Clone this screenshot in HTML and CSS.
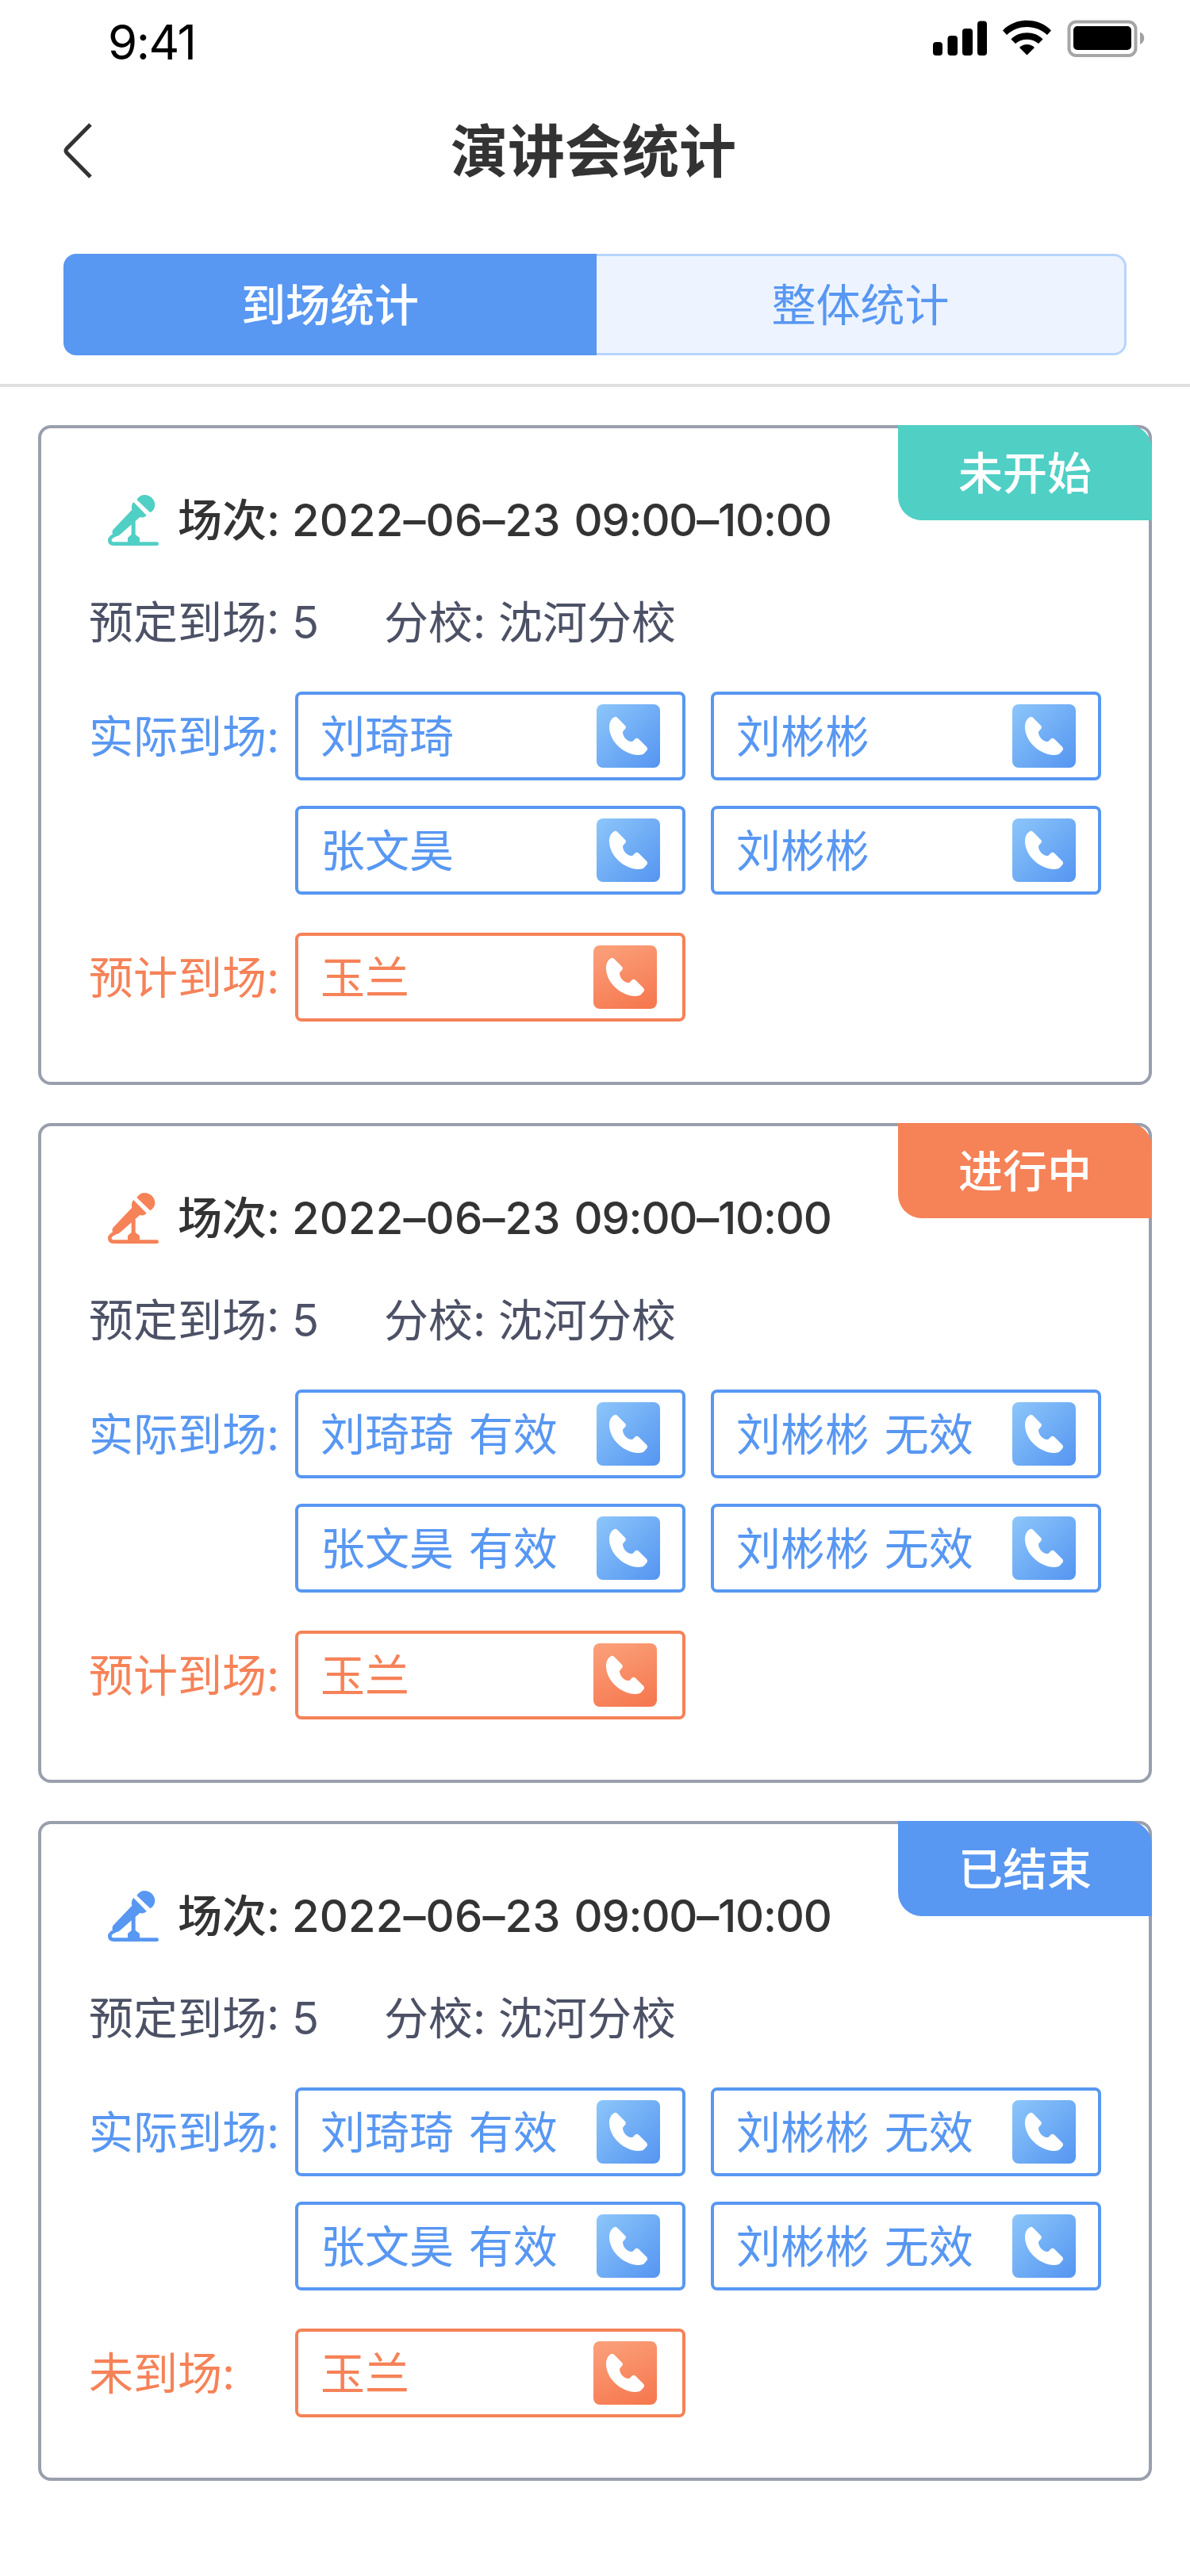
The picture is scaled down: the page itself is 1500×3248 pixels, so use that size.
FILE: index.html
```html
<!DOCTYPE html>
<html lang="zh-CN">
<head>
  <meta charset="UTF-8">
  <meta name="viewport" content="width=device-width, initial-scale=1.0">
  <title>演讲会统计</title>
  <link rel="stylesheet" href="styles.css">
</head>
<body>

  <!-- Shared icons -->
  <svg class="sprite" width="0" height="0">
    <defs>
      <linearGradient id="blueFill" x1="0" y1="0" x2="1" y2="1">
        <stop offset="0" stop-color="#8dc6fa"/>
        <stop offset="1" stop-color="#5495f1"/>
      </linearGradient>
      <linearGradient id="orangeFill" x1="0.3" y1="0" x2="0.7" y2="1">
        <stop offset="0" stop-color="#fa9e78"/>
        <stop offset="1" stop-color="#f67950"/>
      </linearGradient>
    </defs>
    <symbol id="phone" viewBox="0 0 240 240">
      <path fill="#fff" d="M66 49Q72 45 78 50L109 82Q113 87 109 92L101 101Q99 103 99 107C101 125 115 139 132 141Q136 142 138 139L147 130Q153 126 159 131L190 162Q194 168 191 173L180 186C173 192 160 193 148 191C95 184 48 135 48 86C48 68 55 56 66 49Z"/>
    </symbol>
    <symbol id="phone-blue" viewBox="0 0 240 240">
      <rect width="240" height="240" rx="24" fill="url(#blueFill)"/>
      <use href="#phone" width="240" height="240"/>
    </symbol>
    <symbol id="phone-orange" viewBox="0 0 240 240">
      <rect width="240" height="240" rx="24" fill="url(#orangeFill)"/>
      <use href="#phone" width="240" height="240"/>
    </symbol>
    <symbol id="mic" viewBox="0 0 192 192">
      <path fill="currentColor" d="M109 18C118 5 128 0 138 0C160 0 178 18 178 38C178 48 172 60 160 67Z"/>
      <path fill="currentColor" d="M97 27L146 77C140 84 130 87 121 84L46 150C42 154 38 156 34 156L17 148C16 140 17 134 20 131L91 56C88 45 90 35 97 27Z"/>
      <path fill="currentColor" d="M89 100H104V150L120 162V180H75V162L89 150Z"/>
      <path fill="none" stroke="currentColor" stroke-width="14" stroke-linecap="round" d="M28 151C12 158 7 164 7 171Q7 185 22 185H185"/>
    </symbol>
  </svg>

  <div class="status-bar">
    <span class="time">9:41</span>
    <svg class="status-icons" width="270" height="50" viewBox="0 0 270 50">
      <rect x="0" y="31" width="12" height="17" rx="4"/>
      <rect x="18.5" y="23" width="12.5" height="25" rx="4"/>
      <rect x="37" y="14" width="13" height="34" rx="4"/>
      <rect x="56" y="4.500" width="12" height="43.500" rx="4"/>
      <path d="M88 16.500C103 -0.500 134 -0.500 149 16.500L144 22C130 8.500 107 8.500 93 22Z"/>
      <path d="M98.500 27.500C108 16.500 129 16.500 138.500 27.500L133 33C125 26 112 26 104 33Z"/>
      <path d="M109 38C114 32.500 123 32.500 128 38L118.500 47.500Z"/>
      <rect x="171.500" y="5.500" width="84" height="42.500" rx="9" fill="none" stroke="#a6a6a6" stroke-width="4"/>
      <rect x="177" y="11" width="73" height="30" rx="5"/>
      <path fill="#a0a0a0" d="M261 18.500C268 21 268 31 261 34Z"/>
    </svg>
  </div>

  <header class="nav">
    <svg class="back" width="40" height="72" viewBox="0 0 40 72">
      <path d="M34 3L4 33.500Q2 36 4 38.500L34 69" fill="none" stroke="#333" stroke-width="5"/>
    </svg>
    <h1>演讲会统计</h1>
  </header>

  <div class="tabs">
    <div class="tab active">到场统计</div>
    <div class="tab">整体统计</div>
  </div>

  <main class="list">

    <section class="card teal">
      <div class="badge">未开始</div>
      <div class="session">
        <svg class="mic"><use href="#mic"/></svg>
        <span>场次: <span class="day">2022–06–23</span> <span class="hours">09:00–10:00</span></span>
      </div>
      <div class="info"><span class="count">预定到场: 5</span><span>分校: 沈河分校</span></div>
      <div class="group">
        <div class="label">实际到场:</div>
        <div class="people">
          <div class="person">刘琦琦<svg class="phone"><use href="#phone-blue"/></svg></div>
          <div class="person">刘彬彬<svg class="phone"><use href="#phone-blue"/></svg></div>
          <div class="person">张文昊<svg class="phone"><use href="#phone-blue"/></svg></div>
          <div class="person">刘彬彬<svg class="phone"><use href="#phone-blue"/></svg></div>
        </div>
      </div>
      <div class="group expected">
        <div class="label">预计到场:</div>
        <div class="people">
          <div class="person">玉兰<svg class="phone"><use href="#phone-orange"/></svg></div>
        </div>
      </div>
    </section>

    <section class="card orange">
      <div class="badge">进行中</div>
      <div class="session">
        <svg class="mic"><use href="#mic"/></svg>
        <span>场次: <span class="day">2022–06–23</span> <span class="hours">09:00–10:00</span></span>
      </div>
      <div class="info"><span class="count">预定到场: 5</span><span>分校: 沈河分校</span></div>
      <div class="group">
        <div class="label">实际到场:</div>
        <div class="people">
          <div class="person">刘琦琦 有效<svg class="phone"><use href="#phone-blue"/></svg></div>
          <div class="person">刘彬彬 无效<svg class="phone"><use href="#phone-blue"/></svg></div>
          <div class="person">张文昊 有效<svg class="phone"><use href="#phone-blue"/></svg></div>
          <div class="person">刘彬彬 无效<svg class="phone"><use href="#phone-blue"/></svg></div>
        </div>
      </div>
      <div class="group expected">
        <div class="label">预计到场:</div>
        <div class="people">
          <div class="person">玉兰<svg class="phone"><use href="#phone-orange"/></svg></div>
        </div>
      </div>
    </section>

    <section class="card blue">
      <div class="badge">已结束</div>
      <div class="session">
        <svg class="mic"><use href="#mic"/></svg>
        <span>场次: <span class="day">2022–06–23</span> <span class="hours">09:00–10:00</span></span>
      </div>
      <div class="info"><span class="count">预定到场: 5</span><span>分校: 沈河分校</span></div>
      <div class="group">
        <div class="label">实际到场:</div>
        <div class="people">
          <div class="person">刘琦琦 有效<svg class="phone"><use href="#phone-blue"/></svg></div>
          <div class="person">刘彬彬 无效<svg class="phone"><use href="#phone-blue"/></svg></div>
          <div class="person">张文昊 有效<svg class="phone"><use href="#phone-blue"/></svg></div>
          <div class="person">刘彬彬 无效<svg class="phone"><use href="#phone-blue"/></svg></div>
        </div>
      </div>
      <div class="group expected">
        <div class="label">未到场:</div>
        <div class="people">
          <div class="person">玉兰<svg class="phone"><use href="#phone-orange"/></svg></div>
        </div>
      </div>
    </section>

  </main>

</body>
</html>
```
FILE: styles.css
```css
* {
  box-sizing: border-box;
}

body {
  margin: 0;
  width: 1500px;
  height: 3248px;
  background: #fff;
  color: #333;
  font-family: Inter, "Noto Sans CJK SC", sans-serif;
  font-size: 56px;
  line-height: 80px;
}

svg {
  display: block;
  flex: none;
}

/* Takes no room, but has to stay rendered for its gradients to work */
.sprite {
  position: absolute;
}

/* Phone status bar */
.status-bar {
  display: flex;
  justify-content: space-between;
  align-items: flex-start;
  height: 120px;
  padding: 13px 54px 0 136px;
  color: #000;
}

.time {
  font-size: 60px;
  letter-spacing: -1.5px;
}

.status-icons {
  margin-top: 9px;
}

/* Title row */
.nav {
  display: flex;
  align-items: center;
  height: 140px;
  padding: 0 80px;
}

.nav h1 {
  flex: 1;
  margin: 2px 44px 0 0;
  font-size: 72px;
  font-weight: 700;
  text-align: center;
}

/* Tabs */
.tabs {
  display: flex;
  height: 228px;
  padding: 60px 80px 36px;
  border-bottom: 4px solid #e0e0e0;
}

.tab {
  width: 668px;
  height: 128px;
  border: 3px solid #b7d4fd;
  border-left: none;
  border-radius: 0 16px 16px 0;
  background: #edf4ff;
  color: #5897f2;
  line-height: 124px;
  text-align: center;
}

.tab.active {
  width: 672px;
  border: none;
  border-radius: 16px 0 0 16px;
  background: #5897f2;
  color: #fff;
  font-weight: 500;
  line-height: 130px;
}

/* Session cards */
.list {
  display: flex;
  flex-direction: column;
  gap: 48px;
  padding: 48px;
}

.card {
  position: relative;
  height: 832px;
  padding: 76px 60px 0;
  border: 4px solid #9a9fae;
  border-radius: 16px;
}

.teal { --status: #50cfc5; }
.orange { --status: #f68258; }
.blue { --status: #5897f2; }

.badge {
  position: absolute;
  top: -4px;
  right: -4px;
  width: 320px;
  height: 120px;
  border-radius: 0 30px 0 30px;
  background: var(--status);
  color: #fff;
  font-weight: 500;
  line-height: 122px;
  text-align: center;
}

.session {
  display: flex;
  align-items: center;
  gap: 24px;
  height: 80px;
  padding-left: 24px;
  font-weight: 500;
  line-height: 82px;
}

.mic {
  width: 64px;
  height: 64px;
  color: var(--status);
}

.day {
  letter-spacing: 0.2px;
}

.hours {
  margin-left: 2px;
  letter-spacing: -1.2px;
}

.info {
  display: flex;
  height: 80px;
  margin-top: 48px;
  color: #4c5166;
  line-height: 82px;
}

.count {
  width: 372px;
}

.group {
  display: flex;
  margin-top: 48px;
  color: #5897f2;
}

.label {
  width: 260px;
  height: 112px;
  line-height: 114px;
}

.people {
  display: grid;
  grid-template-columns: 492px 492px;
  gap: 32px;
}

.person {
  display: flex;
  justify-content: space-between;
  height: 112px;
  padding: 0 28px;
  border: 4px solid #5897f2;
  border-radius: 8px;
  line-height: 106px;
  word-spacing: 3px;
}

.phone {
  width: 80px;
  height: 80px;
  margin-top: 12px;
}

.expected {
  color: #f68258;
}

.expected .person {
  padding-right: 32px;
  border-color: #f68258;
}
```
